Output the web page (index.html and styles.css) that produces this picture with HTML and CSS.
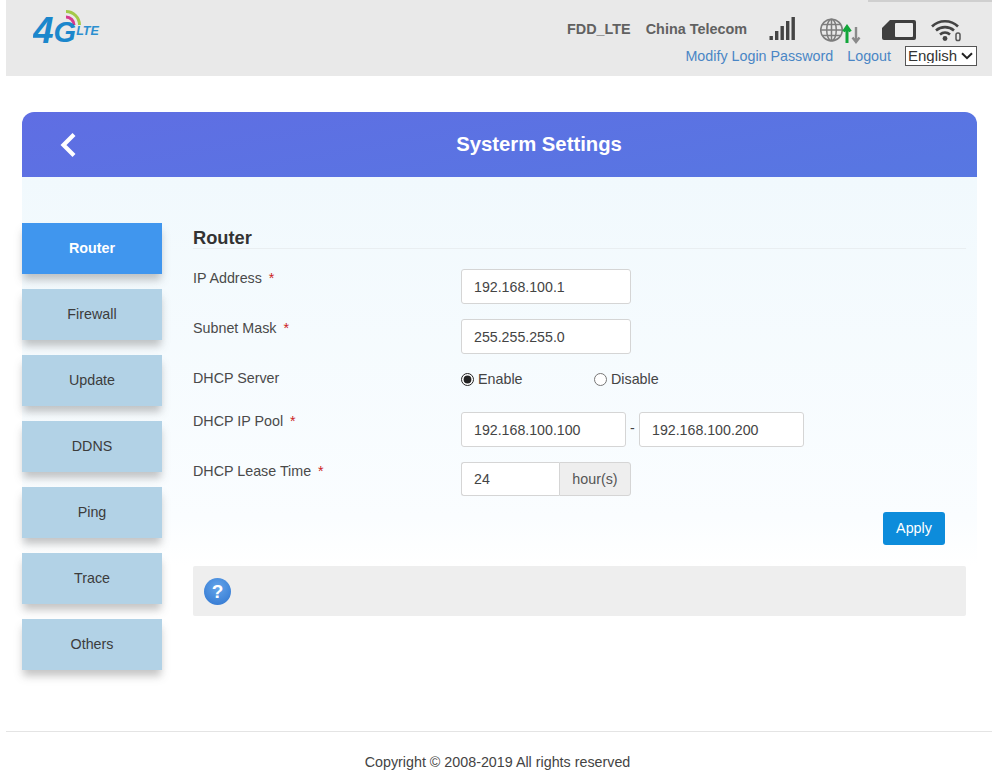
FILE: index.html
```html
<!DOCTYPE html>
<html lang="en">
<head>
<meta charset="utf-8">
<title>System Settings</title>
<link rel="stylesheet" href="styles.css">
</head>
<body>
<div class="top-tab"></div>
<header class="topbar">
  <div class="logo">
    <svg width="70" height="48" viewBox="0 0 70 48">
      <path d="M33 2.500A13.500 13.500 0 0 1 46.500 16" fill="none" stroke="#a3c94a" stroke-width="3"/>
      <path d="M33 8A8 8 0 0 1 41 16" fill="none" stroke="#d63a8e" stroke-width="3"/>
      <text x="0" y="34" class="logo-text"><tspan class="logo-big">4</tspan><tspan class="logo-mid" dy="-1">G</tspan><tspan class="logo-small" dy="-7">LTE</tspan></text>
    </svg>
  </div>
  <div class="status">
    <div class="status-row">
      <span class="status-text">FDD_LTE</span>
      <span class="status-text">China Telecom</span>
      <svg class="ic-signal" width="26" height="26" viewBox="0 0 26 26">
        <rect x="0.500" y="20" width="3.400" height="4" fill="#444"/>
        <rect x="6" y="15" width="3.400" height="9" fill="#444"/>
        <rect x="11.500" y="10" width="3.400" height="14" fill="#444"/>
        <rect x="17" y="5" width="3.400" height="19" fill="#444"/>
        <rect x="22.500" y="1" width="3.400" height="23" fill="#444"/>
      </svg>
      <svg class="ic-globe" width="42" height="26" viewBox="0 0 42 26">
        <g fill="none" stroke="#7d7d7d" stroke-width="1.500">
          <circle cx="11.500" cy="12" r="10.800"/>
          <ellipse cx="11.500" cy="12" rx="4.800" ry="10.800"/>
          <path d="M11.500 1.200V22.800M.7 12H22.300M2.200 6.500H20.800M2.200 17.500H20.800"/>
        </g>
        <path d="M27 25V9M23.500 13.500l3.500-5 3.500 5" fill="none" stroke="#12a63a" stroke-width="3"/>
        <path d="M36 9V24M32.500 19.500l3.500 4.500 3.500-4.500" fill="none" stroke="#8a8a8a" stroke-width="2.400"/>
      </svg>
      <svg class="ic-sim" width="36" height="22" viewBox="0 0 36 22">
        <path d="M9 1H33a2 2 0 0 1 2 2V19a2 2 0 0 1-2 2H3a2 2 0 0 1-2-2V9z" fill="#3f3f3f"/>
        <rect x="14" y="4" width="18" height="14" rx="1" fill="#ececec"/>
      </svg>
      <svg class="ic-wifi" width="32" height="24" viewBox="0 0 32 24">
        <g fill="none" stroke="#444" stroke-width="2.600">
          <path d="M1 8.500C8 1.500 20 1.500 27 8.500"/>
          <path d="M5 12.500C10 8 18 8 23 12.500"/>
          <path d="M9 16.500C12 14 16 14 19 16.500"/>
        </g>
        <circle cx="14" cy="20.500" r="2.400" fill="#444"/>
        <rect x="25" y="15" width="4" height="7.500" rx="1.800" fill="none" stroke="#555" stroke-width="1.500"/>
      </svg>
    </div>
    <div class="link-row">
      <a class="link" href="#">Modify Login Password</a>
      <a class="link" href="#">Logout</a>
      <div class="lang-wrap">
        <select class="lang"><option>English</option></select>
        <svg class="lang-arrow" width="12" height="8" viewBox="0 0 12 8">
          <path d="M1 1.200 6 6.200 11 1.200" fill="none" stroke="#222" stroke-width="2"/>
        </svg>
      </div>
    </div>
  </div>
</header>

<main class="card">
  <div class="card-head">
    <svg class="back" width="18" height="26" viewBox="0 0 18 26">
      <path d="M15 2.500 4.500 13 15 23.500" fill="none" stroke="#fff" stroke-width="4.200"/>
    </svg>
    <h1 class="card-title">Systerm Settings</h1>
  </div>
  <div class="card-body">
    <nav class="side">
      <a class="side-item active" href="#">Router</a>
      <a class="side-item" href="#">Firewall</a>
      <a class="side-item" href="#">Update</a>
      <a class="side-item" href="#">DDNS</a>
      <a class="side-item" href="#">Ping</a>
      <a class="side-item" href="#">Trace</a>
      <a class="side-item" href="#">Others</a>
    </nav>
    <section class="content">
      <h2 class="section-title">Router</h2>
      <div class="form-row">
        <label class="label">IP Address <i class="req">*</i></label>
        <input class="field" value="192.168.100.1">
      </div>
      <div class="form-row">
        <label class="label">Subnet Mask <i class="req">*</i></label>
        <input class="field" value="255.255.255.0">
      </div>
      <div class="form-row radio-row">
        <label class="label">DHCP Server</label>
        <label class="radio r-enable"><input type="radio" name="dhcp" checked>Enable</label>
        <label class="radio"><input type="radio" name="dhcp">Disable</label>
      </div>
      <div class="form-row pool-row">
        <label class="label">DHCP IP Pool <i class="req">*</i></label>
        <input class="field pool" value="192.168.100.100">
        <span class="dash">-</span>
        <input class="field pool" value="192.168.100.200">
      </div>
      <div class="form-row">
        <label class="label">DHCP Lease Time <i class="req">*</i></label>
        <div class="group">
          <input class="group-input" value="24">
          <span class="addon">hour(s)</span>
        </div>
      </div>
      <div class="actions"><button class="apply">Apply</button></div>
      <div class="help">
        <span class="help-icon">?</span>
      </div>
    </section>
  </div>
</main>

<footer class="foot">Copyright © 2008-2019 All rights reserved</footer>
</body>
</html>
```
FILE: styles.css
```css
* { box-sizing: border-box; }
html, body { margin: 0; padding: 0; }
body {
  position: relative;
  height: 779px;
  overflow: hidden;
  background: #fff;
  font-family: "Liberation Sans", Arial, sans-serif;
  color: #444;
}
.top-tab {
  position: absolute;
  left: 868px;
  top: 0;
  width: 124px;
  height: 2px;
  background: #cfcfcf;
  z-index: 2;
}
.topbar {
  height: 76px;
  margin: 0 8px 0 6px;
  padding: 0 15px 0 27px;
  background: #e9e9e9;
  display: flex;
  justify-content: space-between;
}
.logo { padding-top: 9px; height: 60px; }
.logo-text { font-family: "Liberation Sans", sans-serif; font-style: italic; font-weight: 700; }
.logo-big { font-size: 37px; fill: #1b87cc; }
.logo-mid { font-size: 29px; fill: #1b87cc; }
.logo-small { font-size: 12.500px; fill: #2b8fd0; }
.status { display: flex; flex-direction: column; align-items: flex-end; }
.status-row {
  display: flex;
  align-items: center;
  height: 44px;
  padding-top: 13px;
  padding-right: 18px;
}
.status-text {
  font-weight: 700;
  font-size: 14.400px;
  color: #616161;
  margin-right: 15px;
}
.status-text + .status-text { margin-right: 14px; }
.ic-signal { margin: 0 0 0 8px; }
.ic-globe { margin-left: 25px; margin-top: 4px; }
.ic-sim { margin-left: 19px; margin-top: 3px; }
.ic-wifi { margin-left: 14px; margin-top: 2px; margin-right: -4px; }
.link-row { display: flex; align-items: center; margin-top: 2px; }
.link {
  color: #4a86c5;
  font-size: 14.300px;
  text-decoration: none;
  margin-right: 14px;
}
.lang-wrap { position: relative; width: 72px; height: 20px; }
.lang {
  appearance: none;
  display: block;
  width: 72px;
  height: 20px;
  font: 15px "Liberation Sans", sans-serif;
  color: #333;
  background: #fff;
  border: 1px solid #555;
  border-radius: 0;
  padding: 0 0 2px 2px;
}
.lang-arrow { position: absolute; right: 4px; top: 6px; pointer-events: none; }

.card { margin: 36px 23px 0 22px; }
.card-head {
  height: 65px;
  border-radius: 12px 12px 0 0;
  background: linear-gradient(170deg, #5f6ee3 0%, #5777e2 100%);
  display: flex;
  align-items: center;
  justify-content: center;
  position: relative;
}
.back { position: absolute; left: 37px; top: 20px; }
.card-title {
  margin: 0 0 0 79px;
  color: #fff;
  font-weight: 700;
  font-size: 20.300px;
}
.card-body {
  display: flex;
  padding-top: 46px;
  height: 485px;
  background: linear-gradient(180deg, #f1f9fd 0%, #fafdff 70%, #ffffff 80%);
}
.side { width: 140px; flex: none; display: flex; flex-direction: column; gap: 15px; margin-right: 31px; }
.side-item {
  height: 51px;
  flex: none;
  padding-bottom: 2px;
  background: #b2d2e6;
  color: #3c3c3c;
  font-size: 14.300px;
  text-decoration: none;
  display: flex;
  align-items: center;
  justify-content: center;
  box-shadow: 0 7px 8px -1px rgba(90, 90, 90, 0.35);
}
.side-item.active {
  background: #4096ee;
  color: #fff;
  font-weight: 700;
}
.content { width: 773px; }
.section-title {
  margin: 0;
  height: 26px;
  font-weight: 700;
  font-size: 18.300px;
  line-height: 30px;
  color: #333;
  border-bottom: 1px solid #e9eef1;
}
.form-row {
  display: flex;
  align-items: flex-start;
  height: 50px;
}
.content > .form-row:first-of-type { margin-top: 20px; }
.label {
  width: 268px;
  flex: none;
  font-size: 14.300px;
  line-height: 19px;
  color: #4a4a4a;
}
.req {
  color: #c22;
  font-style: normal;
  margin-left: 3px;
}
.field {
  width: 170px;
  height: 35px;
  padding: 0 12px;
  border: 1px solid #d5d5d5;
  border-radius: 3px;
  background: #fff;
  font: 14.200px "Liberation Sans", sans-serif;
  color: #444;
}
.radio-row { height: 43px; }
.radio {
  display: flex;
  align-items: center;
  font-size: 14.300px;
  height: 20px;
  color: #444;
  width: 133px;
}
.radio input { margin: 0 4px 0 0; width: 13px; height: 13px; flex: none; accent-color: #222; }
.pool-row .field.pool { width: 165px; }
.dash {
  width: 13px;
  text-align: center;
  line-height: 33px;
  font-size: 14.300px;
}
.group { display: flex; width: 170px; height: 34px; }
.group-input {
  width: 98px;
  padding: 0 12px;
  border: 1px solid #d5d5d5;
  border-right: 0;
  border-radius: 3px 0 0 3px;
  background: #fff;
  font: 14.200px "Liberation Sans", sans-serif;
  color: #444;
}
.addon {
  flex: 1;
  display: flex;
  align-items: center;
  justify-content: center;
  border: 1px solid #d5d5d5;
  border-radius: 0 3px 3px 0;
  background: #eee;
  font-size: 14.300px;
  color: #555;
}
.actions { display: flex; justify-content: flex-end; padding: 0 21px 0 0; }
.apply {
  width: 62px;
  height: 33px;
  border: 0;
  border-radius: 3px;
  padding: 0 0 2px;
  background: #0d8cdb;
  color: #fff;
  font: 14.300px "Liberation Sans", sans-serif;
}
.help {
  margin-top: 21px;
  height: 50px;
  background: #eeeeee;
  border-radius: 2px;
  display: flex;
  align-items: center;
  padding-left: 11px;
}
.help-icon {
  width: 27px;
  height: 27px;
  border-radius: 50%;
  background: radial-gradient(circle at 50% 35%, #64a5ea, #2d73cf);
  color: #fff;
  font: bold 19px/27px "Liberation Sans", sans-serif;
  text-align: center;
}
.foot {
  margin: 69px 8px 0 6px;
  border-top: 1px solid #e4e4e4;
  padding: 22px 3px 0 0;
  text-align: center;
  font-size: 14.300px;
  color: #444;
}
```
